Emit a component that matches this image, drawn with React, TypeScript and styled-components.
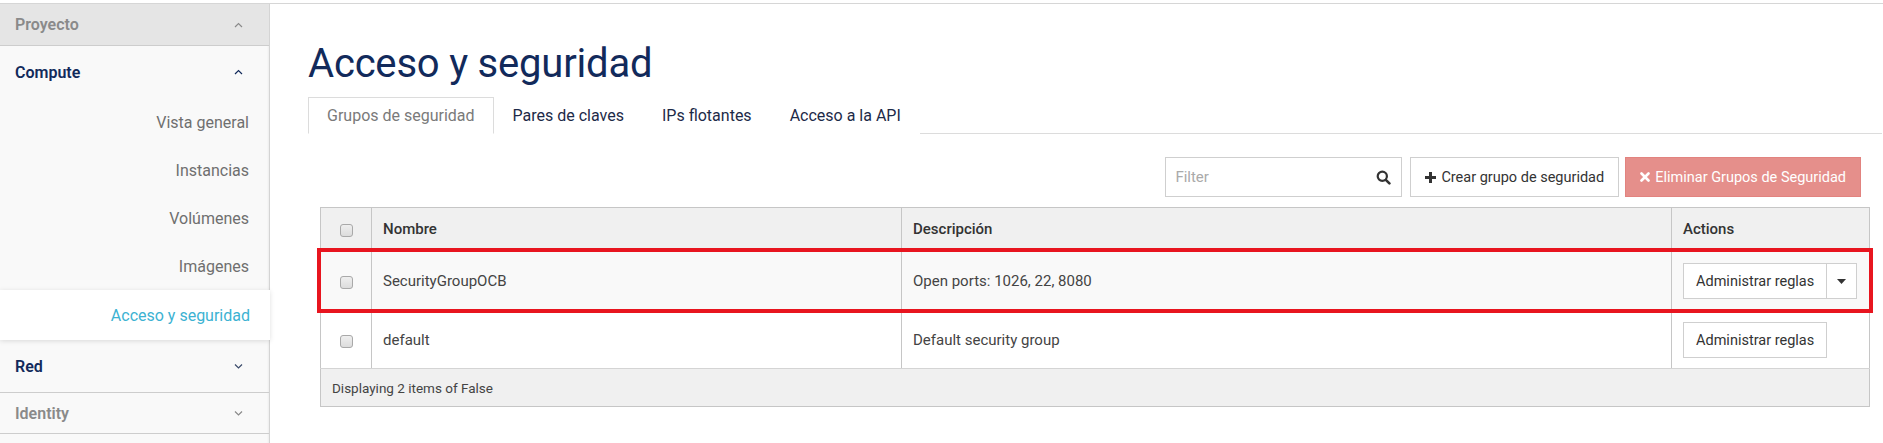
import React from 'react';
import styled, { createGlobalStyle } from 'styled-components';

const NAVY = '#122a5b';

const Global = createGlobalStyle`
  html, body { margin: 0; padding: 0; background: #fff; }
  body { font-family: Roboto, "Open Sans", "Liberation Sans", sans-serif; color: #333; }
  * { box-sizing: border-box; }
`;

const Page = styled.div`
  display: flex;
  margin-top: 3px;
  border-top: 1px solid #d6d6d6;
  min-height: 440px;
`;

const Sidebar = styled.nav`
  width: 270px;
  flex: none;
  display: flex;
  flex-direction: column;
  background: #f9f9f9;
  border-right: 1px solid #d4d4d4;
  box-shadow: inset -2px 0 2px -1px rgba(0, 0, 0, 0.05);
`;

const SectionHead = styled.div<{ $h: number; $tone: 'navy' | 'muted'; $bg?: string; $border?: boolean }>`
  display: flex;
  align-items: center;
  justify-content: space-between;
  height: ${p => p.$h}px;
  padding: 0 26px 0 15px;
  font-size: 16px;
  font-weight: 600;
  color: ${p => (p.$tone === 'navy' ? NAVY : '#8a8a8a')};
  background: ${p => p.$bg || 'transparent'};
  border-bottom: ${p => (p.$border ? '1px solid #cdcdcd' : 'none')};
`;

const SubItem = styled.div<{ $active?: boolean }>`
  height: ${p => (p.$active ? 50 : 48)}px;
  display: flex;
  align-items: center;
  justify-content: flex-end;
  padding-right: 20px;
  font-size: 16px;
  color: ${p => (p.$active ? '#3cb2d2' : '#6f6f6f')};
  background: ${p => (p.$active ? '#fff' : 'transparent')};
  ${p =>
    p.$active &&
    `
    position: relative;
    z-index: 1;
    margin-right: -1px;
    box-shadow: 0 1px 5px rgba(0,0,0,0.13);
  `}
`;

const SidebarFill = styled.div`
  flex: 1;
`;

const Chevron = ({ up, color }: { up?: boolean; color: string }) => (
  <svg width="9" height="6" viewBox="0 0 9 6" style={{ display: 'block' }}>
    <polyline
      points={up ? '1,5 4.5,1.5 8,5' : '1,1.5 4.5,5 8,1.5'}
      fill="none"
      stroke={color}
      strokeWidth="1.2"
    />
  </svg>
);

const Main = styled.main`
  flex: 1;
  min-width: 0;
  padding: 0 1px 0 38px;
`;

const Title = styled.h1`
  margin: 36px 0 9px 0;
  font-size: 40px;
  line-height: 48px;
  font-weight: 400;
  color: ${NAVY};
  letter-spacing: -0.2px;
`;

const TabBar = styled.div`
  display: flex;
  border-bottom: 1px solid #dcdcdc;
`;

const Tab = styled.div<{ $active?: boolean }>`
  height: 37px;
  line-height: 35px;
  padding: 0 18px;
  margin-bottom: -1px;
  font-size: 16px;
  border: 1px solid ${p => (p.$active ? '#dcdcdc' : 'transparent')};
  border-bottom-color: ${p => (p.$active ? '#fff' : 'transparent')};
  background: #fff;
  color: ${p => (p.$active ? '#7a7a7a' : '#1d2a48')};
`;

const TableArea = styled.section`
  margin: 0 12px;
`;

const Toolbar = styled.div`
  display: flex;
  justify-content: flex-end;
  align-items: center;
  margin-top: 23px;
  padding-right: 9px;
`;

const FilterBox = styled.div`
  width: 237px;
  height: 40px;
  border: 1px solid #cfcfcf;
  display: flex;
  align-items: center;
  justify-content: space-between;
  padding: 0 10px 0 9px;
  margin-right: 8px;
  font-size: 15px;
  color: #aaa;
`;

const ToolButton = styled.button<{ $danger?: boolean }>`
  height: 40px;
  display: inline-flex;
  align-items: center;
  gap: 5px;
  padding: 0 14px;
  margin-left: ${p => (p.$danger ? '6px' : '0')};
  font-family: inherit;
  font-size: 14.5px;
  white-space: nowrap;
  border: 1px solid ${p => (p.$danger ? '#e2837f' : '#cfcfcf')};
  background: ${p => (p.$danger ? '#e58f8b' : '#fff')};
  color: ${p => (p.$danger ? '#fff' : '#333')};
  cursor: pointer;
`;

const TableWrap = styled.div`
  position: relative;
  margin-top: 10px;
`;

const Table = styled.table`
  width: 100%;
  border-collapse: collapse;
  border: 1px solid #c6c6c6;
  font-size: 15px;
  color: #444;
  table-layout: fixed;
`;

const Th = styled.th<{ $w?: number; $center?: boolean }>`
  ${p => (p.$w ? `width: ${p.$w}px;` : '')}
  height: 43px;
  text-align: ${p => (p.$center ? 'center' : 'left')};
  padding: 0 11px;
  font-weight: 500;
  color: #333;
  background: #f0f0f0;
  border: 1px solid #c6c6c6;
`;

const Tr = styled.tr<{ $h: number; $striped?: boolean }>`
  height: ${p => p.$h}px;
  background: ${p => (p.$striped ? '#f9f9f9' : '#fff')};
`;

const Td = styled.td<{ $center?: boolean }>`
  padding: 0 11px;
  text-align: ${p => (p.$center ? 'center' : 'left')};
  vertical-align: middle;
  white-space: nowrap;
  border-left: 1px solid #c6c6c6;
  border-right: 1px solid #c6c6c6;
  border-bottom: 1px solid #d4d4d4;
`;

const FooterCell = styled.td`
  height: 38px;
  padding: 0 11px;
  font-size: 13.5px;
  color: #444;
  background: #f0f0f0;
  border-top: 1px solid #c6c6c6;
`;

const CheckBox = styled.span`
  display: inline-block;
  width: 13px;
  height: 13px;
  vertical-align: middle;
  border: 1px solid #a9a9a9;
  border-radius: 3px;
  background: linear-gradient(#efefef, #dcdcdc);
`;

const BtnGroup = styled.div`
  display: inline-flex;
  height: 36px;
  vertical-align: middle;
  white-space: nowrap;
`;

const GroupBtn = styled.button<{ $caret?: boolean }>`
  height: 36px;
  flex: none;
  padding: ${p => (p.$caret ? '0' : '0 12px')};
  width: ${p => (p.$caret ? '30px' : 'auto')};
  display: inline-flex;
  align-items: center;
  justify-content: center;
  white-space: nowrap;
  font-family: inherit;
  font-size: 14.5px;
  color: #333;
  background: #fff;
  border: 1px solid #cfcfcf;
  ${p => (p.$caret ? 'border-left: none;' : '')}
`;

const Highlight = styled.div`
  position: absolute;
  left: -3px;
  top: 41px;
  width: 1556px;
  height: 65px;
  border: 4px solid #e8151f;
  pointer-events: none;
`;

const SearchIcon = () => (
  <svg width="15" height="15" viewBox="0 0 15 15">
    <circle cx="6.3" cy="6.3" r="4.6" fill="none" stroke="#333" strokeWidth="2.2" />
    <line x1="9.8" y1="9.8" x2="13.4" y2="13.4" stroke="#333" strokeWidth="2.6" strokeLinecap="round" />
  </svg>
);

const PlusIcon = () => (
  <svg width="11" height="11" viewBox="0 0 11 11">
    <rect x="4" y="0" width="3" height="11" fill="#333" />
    <rect x="0" y="4" width="11" height="3" fill="#333" />
  </svg>
);

const TimesIcon = () => (
  <svg width="10" height="10" viewBox="0 0 10 10">
    <line x1="1.5" y1="1.5" x2="8.5" y2="8.5" stroke="#fff" strokeWidth="2.6" strokeLinecap="round" />
    <line x1="8.5" y1="1.5" x2="1.5" y2="8.5" stroke="#fff" strokeWidth="2.6" strokeLinecap="round" />
  </svg>
);

const Caret = () => (
  <svg width="9" height="5" viewBox="0 0 9 5">
    <polygon points="0,0 9,0 4.5,5" fill="#333" />
  </svg>
);

const rows = [
  { name: 'SecurityGroupOCB', desc: 'Open ports: 1026, 22, 8080', h: 61, striped: true, caret: true },
  { name: 'default', desc: 'Default security group', h: 57, striped: false, caret: false },
];

export default function App() {
  return (
    <>
      <Global />
      <Page>
        <Sidebar>
          <SectionHead $h={42} $tone="muted" $bg="#e5e5e5" $border>
            Proyecto <Chevron up color="#8a8a8a" />
          </SectionHead>
          <SectionHead $h={52} $tone="navy">
            Compute <Chevron up color={NAVY} />
          </SectionHead>
          <SubItem>Vista general</SubItem>
          <SubItem>Instancias</SubItem>
          <SubItem>Volúmenes</SubItem>
          <SubItem>Imágenes</SubItem>
          <SubItem $active>Acceso y seguridad</SubItem>
          <SectionHead $h={53} $tone="navy" $border>
            Red <Chevron color="#3a4a6a" />
          </SectionHead>
          <SectionHead $h={41} $tone="muted" $border>
            Identity <Chevron color="#8a8a8a" />
          </SectionHead>
          <SidebarFill />
        </Sidebar>
        <Main>
          <Title>Acceso y seguridad</Title>
          <TabBar>
            <Tab $active>Grupos de seguridad</Tab>
            <Tab>Pares de claves</Tab>
            <Tab>IPs flotantes</Tab>
            <Tab>Acceso a la API</Tab>
          </TabBar>
          <TableArea>
            <Toolbar>
              <FilterBox>
                Filter <SearchIcon />
              </FilterBox>
              <ToolButton>
                <PlusIcon /> Crear grupo de seguridad
              </ToolButton>
              <ToolButton $danger>
                <TimesIcon /> Eliminar Grupos de Seguridad
              </ToolButton>
            </Toolbar>
            <TableWrap>
              <Table>
                <thead>
                  <tr>
                    <Th $w={51} $center>
                      <CheckBox />
                    </Th>
                    <Th $w={530}>Nombre</Th>
                    <Th>Descripción</Th>
                    <Th $w={198}>Actions</Th>
                  </tr>
                </thead>
                <tbody>
                  {rows.map(r => (
                    <Tr key={r.name} $h={r.h} $striped={r.striped}>
                      <Td $center>
                        <CheckBox />
                      </Td>
                      <Td>{r.name}</Td>
                      <Td>{r.desc}</Td>
                      <Td>
                        <BtnGroup>
                          <GroupBtn>Administrar reglas</GroupBtn>
                          {r.caret && (
                            <GroupBtn $caret>
                              <Caret />
                            </GroupBtn>
                          )}
                        </BtnGroup>
                      </Td>
                    </Tr>
                  ))}
                </tbody>
                <tfoot>
                  <tr>
                    <FooterCell colSpan={4}>Displaying 2 items of False</FooterCell>
                  </tr>
                </tfoot>
              </Table>
              <Highlight />
            </TableWrap>
          </TableArea>
        </Main>
      </Page>
    </>
  );
}
